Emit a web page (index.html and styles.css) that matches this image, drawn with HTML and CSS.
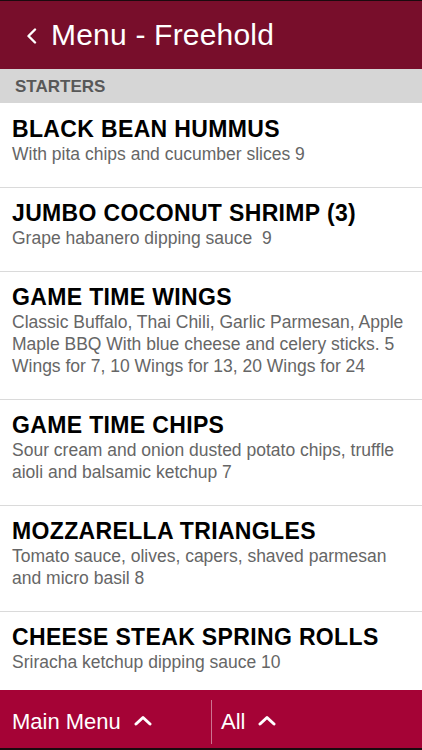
FILE: index.html
```html
<!DOCTYPE html>
<html>
<head>
    <meta charset="utf-8">
    <title>Menu - Freehold</title>
    <link rel="stylesheet" href="styles.css">
</head>
<body>
    <div class="app">
        <div class="header">
            <svg class="back" width="11" height="16" viewBox="0 0 11 16">
                <polyline points="9,1.5 2.5,8 9,14.5" fill="none" stroke="#fff" stroke-width="2.4" stroke-linecap="round" stroke-linejoin="round"/>
            </svg>
            <h1>Menu - Freehold</h1>
        </div>

        <div class="section">STARTERS</div>

        <div class="list">
            <div class="item">
                <h2>BLACK BEAN HUMMUS</h2>
                <p>With pita chips and cucumber slices 9</p>
            </div>
            <div class="item">
                <h2>JUMBO COCONUT SHRIMP (3)</h2>
                <p>Grape habanero dipping sauce&nbsp; 9</p>
            </div>
            <div class="item">
                <h2>GAME TIME WINGS</h2>
                <p>Classic Buffalo, Thai Chili, Garlic Parmesan, Apple Maple BBQ With blue cheese and celery sticks. 5 Wings for 7, 10 Wings for 13, 20 Wings for 24</p>
            </div>
            <div class="item">
                <h2>GAME TIME CHIPS</h2>
                <p>Sour cream and onion dusted potato chips, truffle aioli and balsamic ketchup 7</p>
            </div>
            <div class="item">
                <h2>MOZZARELLA TRIANGLES</h2>
                <p>Tomato sauce, olives, capers, shaved parmesan and micro basil 8</p>
            </div>
            <div class="item">
                <h2>CHEESE STEAK SPRING ROLLS</h2>
                <p>Sriracha ketchup dipping sauce 10</p>
            </div>
        </div>

        <div class="footer">
            <div class="tab tab-main">
                Main Menu
                <svg class="up" width="18" height="11" viewBox="0 0 18 11">
                    <polyline points="2,9 9,2.5 16,9" fill="none" stroke="#fff" stroke-width="3" stroke-linecap="round" stroke-linejoin="round"/>
                </svg>
            </div>
            <div class="divider"></div>
            <div class="tab tab-all">
                All
                <svg class="up" width="18" height="11" viewBox="0 0 18 11">
                    <polyline points="2,9 9,2.5 16,9" fill="none" stroke="#fff" stroke-width="3" stroke-linecap="round" stroke-linejoin="round"/>
                </svg>
            </div>
        </div>
    </div>
</body>
</html>
```

FILE: styles.css
```css
body {
    margin: 0;
    padding: 0;
    font-family: "Liberation Sans", Arial, sans-serif;
    background: #fff;
}
.app {
    width: 422px;
    height: 750px;
    display: flex;
    flex-direction: column;
    overflow: hidden;
}
.header {
    height: 69px;
    box-sizing: border-box;
    border-top: 1px solid #1a0a0e;
    background-color: #780e2b;
    display: flex;
    align-items: center;
    padding-left: 26px;
    flex-shrink: 0;
}
.header .back {
    margin-right: 14px;
    margin-top: 1px;
}
.header h1 {
    margin: 0;
    color: #fff;
    font-size: 30px;
    font-weight: normal;
    letter-spacing: 0.2px;
}
.section {
    height: 34px;
    box-sizing: border-box;
    padding: 1px 0 0 15px;
    line-height: 33px;
    background-color: #d6d6d6;
    color: #585858;
    font-size: 17px;
    font-weight: bold;
    flex-shrink: 0;
}
.list {
    flex: 1;
    overflow: hidden;
}
.item {
    padding: 12px 12px 22px 12px;
    border-bottom: 1px solid #dadada;
}
.item:first-child {
    padding-top: 13px;
}
.item h2 {
    margin: 0;
    font-size: 23px;
    line-height: 26px;
    letter-spacing: 0.35px;
    color: #000;
}
.item p {
    margin: 1px 0 0 0;
    font-size: 17.5px;
    line-height: 22px;
    color: #666;
}
.footer {
    height: 60px;
    box-sizing: border-box;
    border-bottom: 2px solid #1a0a0e;
    background-color: #a50336;
    display: flex;
    align-items: center;
    flex-shrink: 0;
}
.tab {
    display: flex;
    align-items: center;
    color: #fff;
    font-size: 22px;
    padding-top: 5px;
}
.tab .up {
    margin-left: 13px;
    margin-bottom: 2px;
}
.tab-main {
    width: 199px;
    padding-left: 12px;
}
.tab-all {
    padding-left: 9px;
}
.divider {
    width: 1px;
    height: 44px;
    background-color: rgba(255, 255, 255, 0.45);
    margin-top: 6px;
}
```
